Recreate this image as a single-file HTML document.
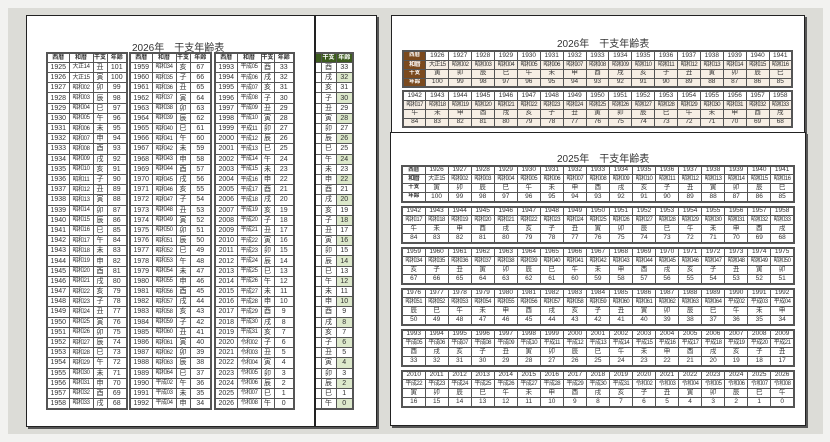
<!DOCTYPE html>
<html><head><meta charset="utf-8"><style>
*{margin:0;padding:0;box-sizing:border-box}
body{width:830px;height:442px;background:#f2f2f0;position:relative;overflow:hidden;font-family:"Liberation Sans","Noto Sans CJK JP",sans-serif;color:#333}
.bg{position:absolute;left:8px;top:8px;width:815px;height:426px;background:#dcdcd7}
.page{position:absolute;background:#fff;border:1.5px solid #222;box-shadow:2px 2px 0 #555}
.title{position:absolute;font-size:10px;color:#333;white-space:nowrap}
table{position:absolute;border-collapse:collapse;table-layout:fixed;border:2px solid #555}
td{border:1px solid #555;text-align:center;font-size:7px;line-height:1;padding:0;white-space:nowrap;overflow:hidden}
.lt tr{height:10.2px}
.lt tr.h{height:9.4px}
.lt tr.h td{font-size:6px;font-weight:bold}
.w{font-size:6px;letter-spacing:-.4px}
.ht td{font-size:6.5px}
.ht tr:nth-child(2) td{font-size:6px;letter-spacing:-.5px}
.tp tr{height:9.1px}
.tp tr:nth-child(n+2) td{background:#f6eee4}
.tp td.b{background:#7b4a1e!important;color:#fff;font-size:5.5px;font-weight:bold}
.bt tr{height:8.9px}
.bt td.l{font-size:5.5px;font-weight:bold}
.gr tr{height:10.2px}
.gr tr.h{height:9.4px}
.gr tr.h td{background:#3d5c1e;color:#fff;font-size:6px;font-weight:bold}
.gr td.g{background:#dde9cc}
</style></head><body>
<div class="bg"></div>

<!-- left page -->
<div class="page" style="left:26px;top:15px;width:351px;height:412px"></div>
<div style="position:absolute;left:314px;top:15px;width:2px;height:412px;background:#222"></div>
<div class="title" style="left:132px;top:39px">2026年　干支年齢表</div>

<table class="lt" style="left:46px;top:52px;width:80px"><colgroup><col style="width:22px"><col style="width:24px"><col style="width:14px"><col style="width:20px"></colgroup>
<tr class="h"><td>西暦</td><td>和暦</td><td>干支</td><td>年齢</td></tr>
<tr><td>1925</td><td class="w">大正14</td><td>丑</td><td>101</td></tr>
<tr><td>1926</td><td class="w">大正15</td><td>寅</td><td>100</td></tr>
<tr><td>1927</td><td class="w">昭和02</td><td>卯</td><td>99</td></tr>
<tr><td>1928</td><td class="w">昭和03</td><td>辰</td><td>98</td></tr>
<tr><td>1929</td><td class="w">昭和04</td><td>巳</td><td>97</td></tr>
<tr><td>1930</td><td class="w">昭和05</td><td>午</td><td>96</td></tr>
<tr><td>1931</td><td class="w">昭和06</td><td>未</td><td>95</td></tr>
<tr><td>1932</td><td class="w">昭和07</td><td>申</td><td>94</td></tr>
<tr><td>1933</td><td class="w">昭和08</td><td>酉</td><td>93</td></tr>
<tr><td>1934</td><td class="w">昭和09</td><td>戌</td><td>92</td></tr>
<tr><td>1935</td><td class="w">昭和10</td><td>亥</td><td>91</td></tr>
<tr><td>1936</td><td class="w">昭和11</td><td>子</td><td>90</td></tr>
<tr><td>1937</td><td class="w">昭和12</td><td>丑</td><td>89</td></tr>
<tr><td>1938</td><td class="w">昭和13</td><td>寅</td><td>88</td></tr>
<tr><td>1939</td><td class="w">昭和14</td><td>卯</td><td>87</td></tr>
<tr><td>1940</td><td class="w">昭和15</td><td>辰</td><td>86</td></tr>
<tr><td>1941</td><td class="w">昭和16</td><td>巳</td><td>85</td></tr>
<tr><td>1942</td><td class="w">昭和17</td><td>午</td><td>84</td></tr>
<tr><td>1943</td><td class="w">昭和18</td><td>未</td><td>83</td></tr>
<tr><td>1944</td><td class="w">昭和19</td><td>申</td><td>82</td></tr>
<tr><td>1945</td><td class="w">昭和20</td><td>酉</td><td>81</td></tr>
<tr><td>1946</td><td class="w">昭和21</td><td>戌</td><td>80</td></tr>
<tr><td>1947</td><td class="w">昭和22</td><td>亥</td><td>79</td></tr>
<tr><td>1948</td><td class="w">昭和23</td><td>子</td><td>78</td></tr>
<tr><td>1949</td><td class="w">昭和24</td><td>丑</td><td>77</td></tr>
<tr><td>1950</td><td class="w">昭和25</td><td>寅</td><td>76</td></tr>
<tr><td>1951</td><td class="w">昭和26</td><td>卯</td><td>75</td></tr>
<tr><td>1952</td><td class="w">昭和27</td><td>辰</td><td>74</td></tr>
<tr><td>1953</td><td class="w">昭和28</td><td>巳</td><td>73</td></tr>
<tr><td>1954</td><td class="w">昭和29</td><td>午</td><td>72</td></tr>
<tr><td>1955</td><td class="w">昭和30</td><td>未</td><td>71</td></tr>
<tr><td>1956</td><td class="w">昭和31</td><td>申</td><td>70</td></tr>
<tr><td>1957</td><td class="w">昭和32</td><td>酉</td><td>69</td></tr>
<tr><td>1958</td><td class="w">昭和33</td><td>戌</td><td>68</td></tr>
</table>

<table class="lt" style="left:129px;top:52px;width:81px"><colgroup><col style="width:22px"><col style="width:24px"><col style="width:14px"><col style="width:21px"></colgroup>
<tr class="h"><td>西暦</td><td>和暦</td><td>干支</td><td>年齢</td></tr>
<tr><td>1959</td><td class="w">昭和34</td><td>亥</td><td>67</td></tr>
<tr><td>1960</td><td class="w">昭和35</td><td>子</td><td>66</td></tr>
<tr><td>1961</td><td class="w">昭和36</td><td>丑</td><td>65</td></tr>
<tr><td>1962</td><td class="w">昭和37</td><td>寅</td><td>64</td></tr>
<tr><td>1963</td><td class="w">昭和38</td><td>卯</td><td>63</td></tr>
<tr><td>1964</td><td class="w">昭和39</td><td>辰</td><td>62</td></tr>
<tr><td>1965</td><td class="w">昭和40</td><td>巳</td><td>61</td></tr>
<tr><td>1966</td><td class="w">昭和41</td><td>午</td><td>60</td></tr>
<tr><td>1967</td><td class="w">昭和42</td><td>未</td><td>59</td></tr>
<tr><td>1968</td><td class="w">昭和43</td><td>申</td><td>58</td></tr>
<tr><td>1969</td><td class="w">昭和44</td><td>酉</td><td>57</td></tr>
<tr><td>1970</td><td class="w">昭和45</td><td>戌</td><td>56</td></tr>
<tr><td>1971</td><td class="w">昭和46</td><td>亥</td><td>55</td></tr>
<tr><td>1972</td><td class="w">昭和47</td><td>子</td><td>54</td></tr>
<tr><td>1973</td><td class="w">昭和48</td><td>丑</td><td>53</td></tr>
<tr><td>1974</td><td class="w">昭和49</td><td>寅</td><td>52</td></tr>
<tr><td>1975</td><td class="w">昭和50</td><td>卯</td><td>51</td></tr>
<tr><td>1976</td><td class="w">昭和51</td><td>辰</td><td>50</td></tr>
<tr><td>1977</td><td class="w">昭和52</td><td>巳</td><td>49</td></tr>
<tr><td>1978</td><td class="w">昭和53</td><td>午</td><td>48</td></tr>
<tr><td>1979</td><td class="w">昭和54</td><td>未</td><td>47</td></tr>
<tr><td>1980</td><td class="w">昭和55</td><td>申</td><td>46</td></tr>
<tr><td>1981</td><td class="w">昭和56</td><td>酉</td><td>45</td></tr>
<tr><td>1982</td><td class="w">昭和57</td><td>戌</td><td>44</td></tr>
<tr><td>1983</td><td class="w">昭和58</td><td>亥</td><td>43</td></tr>
<tr><td>1984</td><td class="w">昭和59</td><td>子</td><td>42</td></tr>
<tr><td>1985</td><td class="w">昭和60</td><td>丑</td><td>41</td></tr>
<tr><td>1986</td><td class="w">昭和61</td><td>寅</td><td>40</td></tr>
<tr><td>1987</td><td class="w">昭和62</td><td>卯</td><td>39</td></tr>
<tr><td>1988</td><td class="w">昭和63</td><td>辰</td><td>38</td></tr>
<tr><td>1989</td><td class="w">昭和64</td><td>巳</td><td>37</td></tr>
<tr><td>1990</td><td class="w">平成02</td><td>午</td><td>36</td></tr>
<tr><td>1991</td><td class="w">平成03</td><td>未</td><td>35</td></tr>
<tr><td>1992</td><td class="w">平成04</td><td>申</td><td>34</td></tr>
</table>

<table class="lt" style="left:214px;top:52px;width:79px"><colgroup><col style="width:22px"><col style="width:24px"><col style="width:13px"><col style="width:20px"></colgroup>
<tr class="h"><td>西暦</td><td>和暦</td><td>干支</td><td>年齢</td></tr>
<tr><td>1993</td><td class="w">平成05</td><td>酉</td><td>33</td></tr>
<tr><td>1994</td><td class="w">平成06</td><td>戌</td><td>32</td></tr>
<tr><td>1995</td><td class="w">平成07</td><td>亥</td><td>31</td></tr>
<tr><td>1996</td><td class="w">平成08</td><td>子</td><td>30</td></tr>
<tr><td>1997</td><td class="w">平成09</td><td>丑</td><td>29</td></tr>
<tr><td>1998</td><td class="w">平成10</td><td>寅</td><td>28</td></tr>
<tr><td>1999</td><td class="w">平成11</td><td>卯</td><td>27</td></tr>
<tr><td>2000</td><td class="w">平成12</td><td>辰</td><td>26</td></tr>
<tr><td>2001</td><td class="w">平成13</td><td>巳</td><td>25</td></tr>
<tr><td>2002</td><td class="w">平成14</td><td>午</td><td>24</td></tr>
<tr><td>2003</td><td class="w">平成15</td><td>未</td><td>23</td></tr>
<tr><td>2004</td><td class="w">平成16</td><td>申</td><td>22</td></tr>
<tr><td>2005</td><td class="w">平成17</td><td>酉</td><td>21</td></tr>
<tr><td>2006</td><td class="w">平成18</td><td>戌</td><td>20</td></tr>
<tr><td>2007</td><td class="w">平成19</td><td>亥</td><td>19</td></tr>
<tr><td>2008</td><td class="w">平成20</td><td>子</td><td>18</td></tr>
<tr><td>2009</td><td class="w">平成21</td><td>丑</td><td>17</td></tr>
<tr><td>2010</td><td class="w">平成22</td><td>寅</td><td>16</td></tr>
<tr><td>2011</td><td class="w">平成23</td><td>卯</td><td>15</td></tr>
<tr><td>2012</td><td class="w">平成24</td><td>辰</td><td>14</td></tr>
<tr><td>2013</td><td class="w">平成25</td><td>巳</td><td>13</td></tr>
<tr><td>2014</td><td class="w">平成26</td><td>午</td><td>12</td></tr>
<tr><td>2015</td><td class="w">平成27</td><td>未</td><td>11</td></tr>
<tr><td>2016</td><td class="w">平成28</td><td>申</td><td>10</td></tr>
<tr><td>2017</td><td class="w">平成29</td><td>酉</td><td>9</td></tr>
<tr><td>2018</td><td class="w">平成30</td><td>戌</td><td>8</td></tr>
<tr><td>2019</td><td class="w">平成31</td><td>亥</td><td>7</td></tr>
<tr><td>2020</td><td class="w">令和02</td><td>子</td><td>6</td></tr>
<tr><td>2021</td><td class="w">令和03</td><td>丑</td><td>5</td></tr>
<tr><td>2022</td><td class="w">令和04</td><td>寅</td><td>4</td></tr>
<tr><td>2023</td><td class="w">令和05</td><td>卯</td><td>3</td></tr>
<tr><td>2024</td><td class="w">令和06</td><td>辰</td><td>2</td></tr>
<tr><td>2025</td><td class="w">令和07</td><td>巳</td><td>1</td></tr>
<tr><td>2026</td><td class="w">令和08</td><td>午</td><td>0</td></tr>
</table>

<div style="position:absolute;left:316px;top:50px;width:40px;height:362px;overflow:hidden">
<table class="gr" style="left:-2px;top:2px;width:40px"><colgroup><col style="width:6px"><col style="width:15px"><col style="width:17px"></colgroup>
<tr class="h"><td></td><td>干支</td><td>年齢</td></tr>
<tr><td></td><td>酉</td><td>33</td></tr>
<tr><td></td><td>戌</td><td class="g">32</td></tr>
<tr><td></td><td>亥</td><td>31</td></tr>
<tr><td></td><td>子</td><td class="g">30</td></tr>
<tr><td></td><td>丑</td><td>29</td></tr>
<tr><td></td><td>寅</td><td class="g">28</td></tr>
<tr><td></td><td>卯</td><td>27</td></tr>
<tr><td></td><td>辰</td><td class="g">26</td></tr>
<tr><td></td><td>巳</td><td>25</td></tr>
<tr><td></td><td>午</td><td class="g">24</td></tr>
<tr><td></td><td>未</td><td>23</td></tr>
<tr><td></td><td>申</td><td class="g">22</td></tr>
<tr><td></td><td>酉</td><td>21</td></tr>
<tr><td></td><td>戌</td><td class="g">20</td></tr>
<tr><td></td><td>亥</td><td>19</td></tr>
<tr><td></td><td>子</td><td class="g">18</td></tr>
<tr><td></td><td>丑</td><td>17</td></tr>
<tr><td></td><td>寅</td><td class="g">16</td></tr>
<tr><td></td><td>卯</td><td>15</td></tr>
<tr><td></td><td>辰</td><td class="g">14</td></tr>
<tr><td></td><td>巳</td><td>13</td></tr>
<tr><td></td><td>午</td><td class="g">12</td></tr>
<tr><td></td><td>未</td><td>11</td></tr>
<tr><td></td><td>申</td><td class="g">10</td></tr>
<tr><td></td><td>酉</td><td>9</td></tr>
<tr><td></td><td>戌</td><td class="g">8</td></tr>
<tr><td></td><td>亥</td><td>7</td></tr>
<tr><td></td><td>子</td><td class="g">6</td></tr>
<tr><td></td><td>丑</td><td>5</td></tr>
<tr><td></td><td>寅</td><td class="g">4</td></tr>
<tr><td></td><td>卯</td><td>3</td></tr>
<tr><td></td><td>辰</td><td class="g">2</td></tr>
<tr><td></td><td>巳</td><td>1</td></tr>
<tr><td></td><td>午</td><td class="g">0</td></tr>
</table></div>

<!-- right top page -->
<div class="page" style="left:391px;top:15px;width:414px;height:130px"></div>
<div class="title" style="left:557px;top:35px">2026年　干支年齢表</div>
<table class="ht tp" style="left:402px;top:50px;width:391px">
<tr><td class="b">西暦</td><td>1926</td><td>1927</td><td>1928</td><td>1929</td><td>1930</td><td>1931</td><td>1932</td><td>1933</td><td>1934</td><td>1935</td><td>1936</td><td>1937</td><td>1938</td><td>1939</td><td>1940</td><td>1941</td></tr>
<tr><td class="b">和暦</td><td>大正15</td><td>昭和02</td><td>昭和03</td><td>昭和04</td><td>昭和05</td><td>昭和06</td><td>昭和07</td><td>昭和08</td><td>昭和09</td><td>昭和10</td><td>昭和11</td><td>昭和12</td><td>昭和13</td><td>昭和14</td><td>昭和15</td><td>昭和16</td></tr>
<tr><td class="b">干支</td><td>寅</td><td>卯</td><td>辰</td><td>巳</td><td>午</td><td>未</td><td>申</td><td>酉</td><td>戌</td><td>亥</td><td>子</td><td>丑</td><td>寅</td><td>卯</td><td>辰</td><td>巳</td></tr>
<tr><td class="b">年齢</td><td>100</td><td>99</td><td>98</td><td>97</td><td>96</td><td>95</td><td>94</td><td>93</td><td>92</td><td>91</td><td>90</td><td>89</td><td>88</td><td>87</td><td>86</td><td>85</td></tr>
</table>
<table class="ht tp" style="left:402px;top:90px;width:391px">
<tr><td>1942</td><td>1943</td><td>1944</td><td>1945</td><td>1946</td><td>1947</td><td>1948</td><td>1949</td><td>1950</td><td>1951</td><td>1952</td><td>1953</td><td>1954</td><td>1955</td><td>1956</td><td>1957</td><td>1958</td></tr>
<tr><td>昭和17</td><td>昭和18</td><td>昭和19</td><td>昭和20</td><td>昭和21</td><td>昭和22</td><td>昭和23</td><td>昭和24</td><td>昭和25</td><td>昭和26</td><td>昭和27</td><td>昭和28</td><td>昭和29</td><td>昭和30</td><td>昭和31</td><td>昭和32</td><td>昭和33</td></tr>
<tr><td>午</td><td>未</td><td>申</td><td>酉</td><td>戌</td><td>亥</td><td>子</td><td>丑</td><td>寅</td><td>卯</td><td>辰</td><td>巳</td><td>午</td><td>未</td><td>申</td><td>酉</td><td>戌</td></tr>
<tr><td>84</td><td>83</td><td>82</td><td>81</td><td>80</td><td>79</td><td>78</td><td>77</td><td>76</td><td>75</td><td>74</td><td>73</td><td>72</td><td>71</td><td>70</td><td>69</td><td>68</td></tr>
</table>

<!-- right bottom page -->
<div class="page" style="left:390px;top:132px;width:416px;height:294px"></div>
<div class="title" style="left:557px;top:150px">2025年　干支年齢表</div>
<table class="ht bt" style="left:401px;top:165px;width:394px">
<tr><td class="l">西暦</td><td>1926</td><td>1927</td><td>1928</td><td>1929</td><td>1930</td><td>1931</td><td>1932</td><td>1933</td><td>1934</td><td>1935</td><td>1936</td><td>1937</td><td>1938</td><td>1939</td><td>1940</td><td>1941</td></tr>
<tr><td class="l">和暦</td><td>大正15</td><td>昭和02</td><td>昭和03</td><td>昭和04</td><td>昭和05</td><td>昭和06</td><td>昭和07</td><td>昭和08</td><td>昭和09</td><td>昭和10</td><td>昭和11</td><td>昭和12</td><td>昭和13</td><td>昭和14</td><td>昭和15</td><td>昭和16</td></tr>
<tr><td class="l">干支</td><td>寅</td><td>卯</td><td>辰</td><td>巳</td><td>午</td><td>未</td><td>申</td><td>酉</td><td>戌</td><td>亥</td><td>子</td><td>丑</td><td>寅</td><td>卯</td><td>辰</td><td>巳</td></tr>
<tr><td class="l">年齢</td><td>100</td><td>99</td><td>98</td><td>97</td><td>96</td><td>95</td><td>94</td><td>93</td><td>92</td><td>91</td><td>90</td><td>89</td><td>88</td><td>87</td><td>86</td><td>85</td></tr>
</table>
<table class="ht bt" style="left:401px;top:206px;width:394px">
<tr><td>1942</td><td>1943</td><td>1944</td><td>1945</td><td>1946</td><td>1947</td><td>1948</td><td>1949</td><td>1950</td><td>1951</td><td>1952</td><td>1953</td><td>1954</td><td>1955</td><td>1956</td><td>1957</td><td>1958</td></tr>
<tr><td>昭和17</td><td>昭和18</td><td>昭和19</td><td>昭和20</td><td>昭和21</td><td>昭和22</td><td>昭和23</td><td>昭和24</td><td>昭和25</td><td>昭和26</td><td>昭和27</td><td>昭和28</td><td>昭和29</td><td>昭和30</td><td>昭和31</td><td>昭和32</td><td>昭和33</td></tr>
<tr><td>午</td><td>未</td><td>申</td><td>酉</td><td>戌</td><td>亥</td><td>子</td><td>丑</td><td>寅</td><td>卯</td><td>辰</td><td>巳</td><td>午</td><td>未</td><td>申</td><td>酉</td><td>戌</td></tr>
<tr><td>84</td><td>83</td><td>82</td><td>81</td><td>80</td><td>79</td><td>78</td><td>77</td><td>76</td><td>75</td><td>74</td><td>73</td><td>72</td><td>71</td><td>70</td><td>69</td><td>68</td></tr>
</table>
<table class="ht bt" style="left:401px;top:247px;width:394px">
<tr><td>1959</td><td>1960</td><td>1961</td><td>1962</td><td>1963</td><td>1964</td><td>1965</td><td>1966</td><td>1967</td><td>1968</td><td>1969</td><td>1970</td><td>1971</td><td>1972</td><td>1973</td><td>1974</td><td>1975</td></tr>
<tr><td>昭和34</td><td>昭和35</td><td>昭和36</td><td>昭和37</td><td>昭和38</td><td>昭和39</td><td>昭和40</td><td>昭和41</td><td>昭和42</td><td>昭和43</td><td>昭和44</td><td>昭和45</td><td>昭和46</td><td>昭和47</td><td>昭和48</td><td>昭和49</td><td>昭和50</td></tr>
<tr><td>亥</td><td>子</td><td>丑</td><td>寅</td><td>卯</td><td>辰</td><td>巳</td><td>午</td><td>未</td><td>申</td><td>酉</td><td>戌</td><td>亥</td><td>子</td><td>丑</td><td>寅</td><td>卯</td></tr>
<tr><td>67</td><td>66</td><td>65</td><td>64</td><td>63</td><td>62</td><td>61</td><td>60</td><td>59</td><td>58</td><td>57</td><td>56</td><td>55</td><td>54</td><td>53</td><td>52</td><td>51</td></tr>
</table>
<table class="ht bt" style="left:401px;top:288px;width:394px">
<tr><td>1976</td><td>1977</td><td>1978</td><td>1979</td><td>1980</td><td>1981</td><td>1982</td><td>1983</td><td>1984</td><td>1985</td><td>1986</td><td>1987</td><td>1988</td><td>1989</td><td>1990</td><td>1991</td><td>1992</td></tr>
<tr><td>昭和51</td><td>昭和52</td><td>昭和53</td><td>昭和54</td><td>昭和55</td><td>昭和56</td><td>昭和57</td><td>昭和58</td><td>昭和59</td><td>昭和60</td><td>昭和61</td><td>昭和62</td><td>昭和63</td><td>昭和64</td><td>平成02</td><td>平成03</td><td>平成04</td></tr>
<tr><td>辰</td><td>巳</td><td>午</td><td>未</td><td>申</td><td>酉</td><td>戌</td><td>亥</td><td>子</td><td>丑</td><td>寅</td><td>卯</td><td>辰</td><td>巳</td><td>午</td><td>未</td><td>申</td></tr>
<tr><td>50</td><td>49</td><td>48</td><td>47</td><td>46</td><td>45</td><td>44</td><td>43</td><td>42</td><td>41</td><td>40</td><td>39</td><td>38</td><td>37</td><td>36</td><td>35</td><td>34</td></tr>
</table>
<table class="ht bt" style="left:401px;top:329px;width:394px">
<tr><td>1993</td><td>1994</td><td>1995</td><td>1996</td><td>1997</td><td>1998</td><td>1999</td><td>2000</td><td>2001</td><td>2002</td><td>2003</td><td>2004</td><td>2005</td><td>2006</td><td>2007</td><td>2008</td><td>2009</td></tr>
<tr><td>平成05</td><td>平成06</td><td>平成07</td><td>平成08</td><td>平成09</td><td>平成10</td><td>平成11</td><td>平成12</td><td>平成13</td><td>平成14</td><td>平成15</td><td>平成16</td><td>平成17</td><td>平成18</td><td>平成19</td><td>平成20</td><td>平成21</td></tr>
<tr><td>酉</td><td>戌</td><td>亥</td><td>子</td><td>丑</td><td>寅</td><td>卯</td><td>辰</td><td>巳</td><td>午</td><td>未</td><td>申</td><td>酉</td><td>戌</td><td>亥</td><td>子</td><td>丑</td></tr>
<tr><td>33</td><td>32</td><td>31</td><td>30</td><td>29</td><td>28</td><td>27</td><td>26</td><td>25</td><td>24</td><td>23</td><td>22</td><td>21</td><td>20</td><td>19</td><td>18</td><td>17</td></tr>
</table>
<table class="ht bt" style="left:401px;top:370px;width:394px">
<tr><td>2010</td><td>2011</td><td>2012</td><td>2013</td><td>2014</td><td>2015</td><td>2016</td><td>2017</td><td>2018</td><td>2019</td><td>2020</td><td>2021</td><td>2022</td><td>2023</td><td>2024</td><td>2025</td><td>2026</td></tr>
<tr><td>平成22</td><td>平成23</td><td>平成24</td><td>平成25</td><td>平成26</td><td>平成27</td><td>平成28</td><td>平成29</td><td>平成30</td><td>平成31</td><td>令和02</td><td>令和03</td><td>令和04</td><td>令和05</td><td>令和06</td><td>令和07</td><td>令和08</td></tr>
<tr><td>寅</td><td>卯</td><td>辰</td><td>巳</td><td>午</td><td>未</td><td>申</td><td>酉</td><td>戌</td><td>亥</td><td>子</td><td>丑</td><td>寅</td><td>卯</td><td>辰</td><td>巳</td><td>午</td></tr>
<tr><td>16</td><td>15</td><td>14</td><td>13</td><td>12</td><td>11</td><td>10</td><td>9</td><td>8</td><td>7</td><td>6</td><td>5</td><td>4</td><td>3</td><td>2</td><td>1</td><td>0</td></tr>
</table>
</body></html>
